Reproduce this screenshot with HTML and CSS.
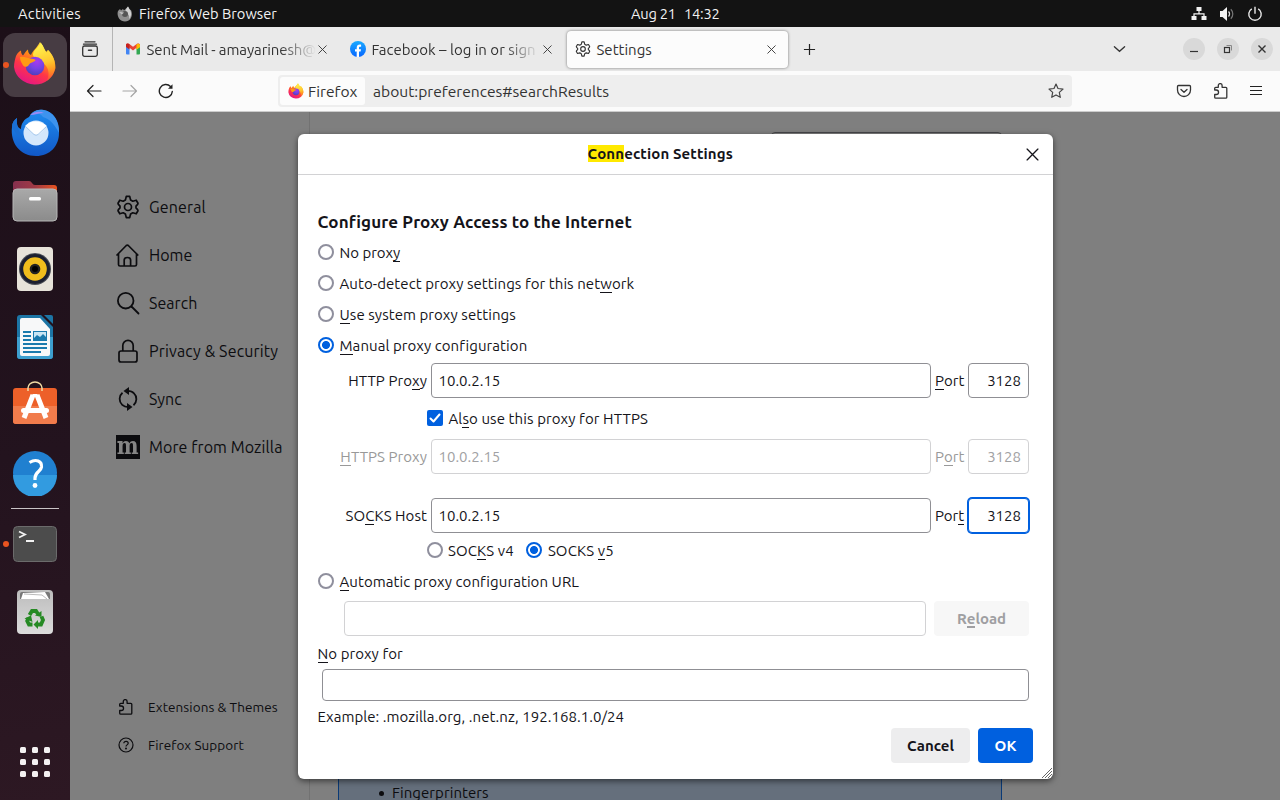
FILE: index.html
```html
<!DOCTYPE html>
<html lang="en">
<head>
<meta charset="utf-8">
<title>Settings</title>
<link rel="stylesheet" href="styles.css">
</head>
<body>
<svg class="defs" width="0" height="0">
  <defs>
    <linearGradient id="fx-body" x1=".8" y1="0" x2=".3" y2="1"><stop offset="0" stop-color="#fff44f"/><stop offset=".35" stop-color="#ff980e"/><stop offset=".65" stop-color="#ff3647"/><stop offset="1" stop-color="#e31587"/></linearGradient>
    <linearGradient id="fx-flame" x1=".5" y1="0" x2=".7" y2="1"><stop offset="0" stop-color="#fff44f"/><stop offset=".5" stop-color="#ffc830"/><stop offset="1" stop-color="#ff8a16" stop-opacity=".3"/></linearGradient>
    <radialGradient id="fx-globe" cx=".6" cy=".25" r=".8"><stop offset="0" stop-color="#a83af0"/><stop offset=".5" stop-color="#7542e5"/><stop offset="1" stop-color="#4a3fb8"/></radialGradient>
    <linearGradient id="tb" x1="0" y1="0" x2="0" y2="1"><stop offset="0" stop-color="#1f8df0"/><stop offset="1" stop-color="#1158c7"/></linearGradient>
    <linearGradient id="folder" x1="0" y1="0" x2="1" y2="0"><stop offset="0" stop-color="#86304f"/><stop offset=".5" stop-color="#a03a45"/><stop offset="1" stop-color="#e95420"/></linearGradient>
    <linearGradient id="grey" x1="0" y1="0" x2="0" y2="1"><stop offset="0" stop-color="#a9a9a9"/><stop offset="1" stop-color="#8b8b8b"/></linearGradient>
    <linearGradient id="bin" x1="0" y1="0" x2="0" y2="1"><stop offset="0" stop-color="#bcbcbc"/><stop offset="1" stop-color="#dcdcdc"/></linearGradient>
    <linearGradient id="fb" x1="0" y1="0" x2="0" y2="1"><stop offset="0" stop-color="#19aaff"/><stop offset="1" stop-color="#0866ff"/></linearGradient>
  </defs>
  <symbol id="firefox" viewBox="0 0 44 46">
    <path d="M3 14C5 10 7 9 8 8.500c0 3 1 4 2 5 1-1 3-5 5-6 0 3 1 4.500 3 5.500 2-5 6-7 9-13 3 3 3.500 7 6 10l2-2c5 5 7.500 11 7.500 18A21 20 0 0 1 1 25C1 21 2 17 3 14z" fill="url(#fx-body)"/>
    <path d="M28 1c3 3 3 7 6 10l1-3c10 10 9 24-1 31 3-8 2-15-6-19-3-2-7-3-8-7 0-5 5-7 8-12z" fill="url(#fx-flame)"/>
    <circle cx="22" cy="24" r="9.300" fill="url(#fx-globe)"/>
    <path d="M7 15c4-1 7 1 10 1.500 3 .5 5 .5 5.500 1.500-.500 2-4 2-6 4-1 1-1 2-2.500 2.500-3 1-4-1-5-3-1-2-2-3-2-6.500z" fill="#ff9a13"/>
  </symbol>
  <symbol id="gear" viewBox="0 0 24 24">
    <path d="M10.300 1.400h3.400l.9 3.600 2.200 1.200 3.400-1 1.800 3-.4 1.200-1.600 1.700v1.800l1.600 1.700.4 1.200-1.800 3-3.400-1-2.200 1.200-.9 3.600h-3.400l-.9-3.600-2.200-1.200-3.400 1-1.800-3 .4-1.200L4 12.900v-1.800L2.400 9.400 2 8.200l1.800-3 3.400 1L9.400 5z" fill="none" stroke="currentColor" stroke-width="1.700" stroke-linejoin="round"/>
    <circle cx="12" cy="12" r="3.500" fill="none" stroke="currentColor" stroke-width="1.700"/>
  </symbol>
  <symbol id="puzzle" viewBox="0 0 16 16">
    <path d="M1.700 7V5.300a1 1 0 0 1 1-1h2.600V2.500a1.900 1.900 0 0 1 3.800 0v1.800h3.700a1 1 0 0 1 1 1v8.900a1 1 0 0 1-1 1H2.700a1 1 0 0 1-1-1v-2.700h1.600a1.900 1.900 0 0 0 0-4.500z" fill="none" stroke="currentColor" stroke-width="1.300" stroke-linejoin="round"/>
  </symbol>
  <symbol id="x" viewBox="0 0 12 12"><path d="M1 1l10 10M11 1L1 11" fill="none" stroke="currentColor" stroke-width="1.200" stroke-linecap="round"/></symbol>
</svg>

<header class="topbar">
  <span class="activities">Activities</span>
  <span class="app">
    <svg class="app-icon" viewBox="0 0 16 16"><path d="M1 5l2-2 1 1.500L6 3l1 1.500L11 .5l1.500 3L14 4c2 4 1 11-6 11.500C2 15.500-.500 9 1 5z" fill="#8f8f8f"/><path d="M11 .5l2 3.500c2 3 1 7-1 9 1-4-1-5-3-6-1-2 0-4 2-6.500z" fill="#d2d2d2"/><circle cx="8" cy="8" r="3" fill="#555"/><path d="M2 6l5 .5-2 2z" fill="#c4c4c4"/></svg>
    <span class="app-name">Firefox Web Browser</span>
  </span>
  <span class="clock"><span>Aug 21</span><span>14:32</span></span>
  <span class="tray">
    <svg width="16" height="16" viewBox="0 0 16 16" fill="#f2f2f2"><path d="M5.500 1h5v4h-5zM.5 10h5v4h-5zM10.500 10h5v4h-5z"/><path d="M8 4v4M3 11V7.800h10V11" fill="none" stroke="#f2f2f2" stroke-width="1.200"/></svg>
    <svg width="16" height="16" viewBox="0 0 16 16"><path d="M1 5h2.500L8 1v14L3.500 11H1z" fill="#f2f2f2"/><path d="M9.500 5.500a3.500 3.500 0 0 1 0 5" stroke="#ddd" fill="none" stroke-width="1.300"/><path d="M11.800 3.300a6.500 6.500 0 0 1 0 9.400" stroke="#777" fill="none" stroke-width="1.200"/></svg>
    <svg width="16" height="16" viewBox="0 0 16 16" fill="none" stroke="#eaeaea" stroke-width="1.400"><path d="M4.800 2.800a6.200 6.200 0 1 0 6.400 0M8 .8v7"/></svg>
  </span>
</header>

<div class="workspace">
  <nav class="dock">
    <div class="dock-item active running"><svg width="44" height="46"><use href="#firefox"/></svg></div>
    <div class="dock-item"><svg width="50" height="48" viewBox="0 0 50 48"><path d="M2 18C0 34 10 47 26 47c14 0 23-10 23-23C49 11 43 2 33 1 26 0 22 3 19 8c-5 2-8 7-8 12-3-1-5-4-4-11-3 2-5 5-5 9z" fill="url(#tb)"/><path d="M49 24C50 12 43 3 34 1c-6-1-10 1-13 4 6-2 10 0 12 3 7 2 12 8 16 16z" fill="#3d93ee"/><path d="M20 6c5-4 10-4 14-2-5 0-9 2-14 2z" fill="#9c8bf5"/><path d="M7 9c-1 9 3 17 9 23-6-3-11-8-14-14 0-4 2-7 5-9z" fill="#1a6fd4"/><circle cx="26" cy="24" r="12.500" fill="#d4e7fb"/><path d="M15 17c6 6 9 9 11.500 9S32 23 37 17c-6-5-15-7-22 0z" fill="#fff"/><path d="M15 17l9 8.500q2 1.500 4 0L37 17" stroke="#a6c8ec" fill="none"/></svg></div>
    <div class="dock-item"><svg width="46" height="42" viewBox="0 0 46 42"><path d="M1 14V4q0-3 3-3h13q2 0 3 2t3 2h19q3 0 3 3v8z" fill="url(#folder)"/><rect x="1" y="9" width="44" height="32" rx="4" fill="url(#grey)" stroke="#b7b7b7"/><rect x="17" y="17" width="12" height="3.500" rx="1.500" fill="#fff"/></svg></div>
    <div class="dock-item"><svg width="38" height="46" viewBox="0 0 38 46"><rect x="1" y="1" width="36" height="44" rx="4" fill="#e7e3da"/><circle cx="19" cy="23" r="16" fill="#4a4d55"/><circle cx="19" cy="23" r="15" fill="#1c2030"/><circle cx="19" cy="23" r="11.800" fill="#f0bd1c"/><circle cx="19" cy="23" r="5.300" fill="#222"/><circle cx="19" cy="23" r="3" fill="#000"/></svg></div>
    <div class="dock-item"><svg width="38" height="46" viewBox="0 0 38 46"><path d="M4 1h21l12 12v29q0 3-3 3H4q-3 0-3-3V4q0-3 3-3z" fill="#1c75a5"/><path d="M1 23h36v19q0 3-3 3H4q-3 0-3-3z" fill="#3d9fcf"/><path d="M28 1h7q2 0 2 2v7z" fill="#1c75a5"/><path d="M6 4h18l10 11v25q0 2-2 2H6q-2 0-2-2V6q0-2 2-2z" fill="#f7f8f9"/><path d="M7 18h8M7 22h8M7 26h8M7 30h24M7 34h24M7 38h18" stroke="#1b7aad" stroke-width="2"/><rect x="17.500" y="17.500" width="13" height="9" fill="#c9e5f4" stroke="#1b7aad"/><path d="M18 26v-2l3-3 3 2 3-3 3 3v3z" fill="#1b7aad"/></svg></div>
    <div class="dock-item store"><svg width="46" height="46" viewBox="0 0 46 46"><path d="M1 11q0-3 3-3h38q3 0 3 3v30q0 3-3 3H4q-3 0-3-3z" fill="#ed6029"/><path d="M1 26h44v15q0 3-3 3H4q-3 0-3-3z" fill="#f17c4c"/><path d="M16 11V8a7 6 0 0 1 14 0v3" fill="none" stroke="#f1dba4" stroke-width="1.500"/><path d="M23 14v3M21 15l-9 23M25 15l9 23" stroke="#fff" stroke-width="5"/><rect x="9" y="28" width="28" height="5" rx="2.500" fill="#fff"/></svg></div>
    <div class="dock-item help"><svg width="46" height="46" viewBox="0 0 46 46"><circle cx="23" cy="23" r="22" fill="#2080d0"/><path d="M1 25a22 22 0 0 0 44 0z" fill="#329be0"/><path d="M17.500 12.500C24 8.500 30 11 29.500 17c-.5 4.500-6.500 5-6.500 11V30" fill="none" stroke="#fff" stroke-width="3.200"/><circle cx="23" cy="35.500" r="2.400" fill="#fff"/></svg></div>
    <div class="dock-sep"></div>
    <div class="dock-item terminal running"><svg width="46" height="38" viewBox="0 0 46 38"><rect x="1.500" y="1.500" width="43" height="35" rx="4" fill="#4c4c4c" stroke="#6b6b6b"/><path d="M7 6.500l6 3-6 3M14 16h8" fill="none" stroke="#f2f2f2" stroke-width="1.800"/></svg></div>
    <div class="dock-item trash"><svg width="38" height="46" viewBox="0 0 38 46"><rect x="1" y="1" width="36" height="44" rx="4" fill="url(#bin)"/><path d="M4 10V5q0-2 2-2h26q2 0 2 2v5z" fill="#777"/><path d="M5 10l2-6 22-1 4 7z" fill="#fff"/><path d="M8 5l18 1 5 4" stroke="#bbb" fill="none"/><g fill="none" stroke="#268a24" stroke-width="3.800"><path d="M13.500 26l2.500-4h4l2 3M25.500 27.500l1.500 3.500-2 4.500h-3M16.500 35.500h-3.500l-1.800-3.500 1.300-3"/></g><g fill="#268a24"><path d="M19 26.500l6.500-4.500v6zM22 31v9l-4.500-4.500zM8.500 29.500l6.500-3 1.500 6.500z"/></g></svg></div>
    <div class="app-grid"><i></i><i></i><i></i><i></i><i></i><i></i><i></i><i></i><i></i></div>
  </nav>

  <div class="browser">
    <div class="tabbar">
      <div class="view-btn"><svg width="18" height="18" viewBox="0 0 18 18" fill="none" stroke="#333" stroke-width="1.300" stroke-linecap="round"><path d="M4 1.800h10M2.500 4.200h13"/><rect x="1.700" y="6" width="14.600" height="10.300" rx="1.800"/><path d="M7.500 10.300h3" stroke-width="1.500"/></svg></div>
      <div class="tab gmail">
        <svg class="fav" viewBox="0 0 16 16"><path d="M1 4v8.500q0 1 1 1h2.500V6z" fill="#4285f4"/><path d="M15 4v8.500q0 1-1 1h-2.500V6z" fill="#34a853"/><path d="M11.500 5L15 3v3l-3.500 2.500z" fill="#fbbc04"/><path d="M1 4c0-1.500 2-2 3-1.200l4 3 4-3C13 2 15 2.500 15 4l-7 5.500L1 4z" fill="#ea4335"/><path d="M11.500 3.300c2-1.300 3.500-.500 3.500 1V6l-3.500 2.500z" fill="#fbbc04"/><path d="M1 4v2l3.500 2.500V3.200C2.500 2 1 2.500 1 4z" fill="#c5221f"/></svg>
        <span class="label">Sent Mail - amayarinesh@</span><svg class="close"><use href="#x"/></svg>
      </div>
      <div class="tab facebook">
        <svg class="fav" viewBox="0 0 16 16"><circle cx="8" cy="8" r="8" fill="url(#fb)"/><path d="M6.700 15.900V10.500H5V8.200h1.700V7c0-2.400 1.200-3.500 3.100-3.500.5 0 1 .1 1.300.2v2h-.9c-1 0-1.200.5-1.200 1.300v1.200H11l-.4 2.300H9v5.400z" fill="#fff"/></svg>
        <span class="label">Facebook – log in or sign</span><svg class="close"><use href="#x"/></svg>
      </div>
      <div class="tab selected">
        <svg class="fav"><use href="#gear"/></svg>
        <span class="label">Settings</span><svg class="close"><use href="#x"/></svg>
      </div>
      <svg class="new-tab" viewBox="0 0 14 14"><path d="M7 1v12M1 7h12" stroke="#222" stroke-width="1.300"/></svg>
      <svg class="all-tabs" viewBox="0 0 14 8"><path d="M1.500 1.500L7 6.500l5.500-5" fill="none" stroke="#333" stroke-width="1.400" stroke-linecap="round"/></svg>
      <div class="win-controls">
        <span><svg width="10" height="10" viewBox="0 0 10 10"><path d="M1 7.500h8" stroke="#333" stroke-width="1.200"/></svg></span>
        <span><svg width="10" height="10" viewBox="0 0 10 10" fill="none"><rect x="1.500" y="3.500" width="5" height="5" stroke="#333" stroke-width="1.200"/><path d="M3.500 1.500h5v5" stroke="#888"/></svg></span>
        <span><svg width="10" height="10" viewBox="0 0 10 10"><path d="M1.500 1.500l7 7M8.500 1.500l-7 7" stroke="#333" stroke-width="1.400"/></svg></span>
      </div>
    </div>

    <div class="toolbar">
      <div class="nav-buttons">
        <svg width="16" height="14" viewBox="0 0 16 14" fill="none" stroke="#222" stroke-width="1.200" stroke-linecap="round" stroke-linejoin="round"><path d="M15 7H1.500M7 1.500L1.500 7 7 12.500"/></svg>
        <svg width="16" height="14" viewBox="0 0 16 14" fill="none" stroke="#a5a5a5" stroke-width="1.200" stroke-linecap="round" stroke-linejoin="round"><path d="M1 7h13.500M9 1.500L14.500 7 9 12.500"/></svg>
        <svg width="16" height="16" viewBox="0 0 16 16" fill="none" stroke="#222" stroke-width="1.400" stroke-linecap="round"><path d="M14.300 8.500A6.500 6.500 0 1 1 12.500 3.500"/><path d="M14.500 1.300v4.500H10z" fill="#222" stroke="none"/></svg>
      </div>
      <div class="urlbar">
        <span class="identity"><svg width="16" height="17"><use href="#firefox"/></svg><span>Firefox</span></span>
        <span class="url">about:preferences#searchResults</span>
        <svg width="16" height="16" viewBox="0 0 16 16" fill="none" stroke="#444" stroke-width="1.200" stroke-linejoin="round"><path d="M8 1l2 4.500 5 .6-3.700 3.300 1 4.900L8 11.900l-4.300 2.400 1-4.900L1 6.100l5-.6z"/></svg>
      </div>
      <div class="tools">
        <svg width="16" height="16" viewBox="0 0 16 16" fill="none" stroke="#333" stroke-width="1.300" stroke-linecap="round" stroke-linejoin="round"><path d="M2.500 2.500h11q1 0 1 1V7a6.500 6.500 0 0 1-13 0V3.500q0-1 1-1zM5 6.500l3 2.800 3-2.800"/></svg>
        <svg width="16" height="16"><use href="#puzzle"/></svg>
        <svg width="14" height="12" viewBox="0 0 14 12"><path d="M1 1.500h12M1 5.500h12M1 9.500h12" stroke="#222" stroke-width="1.200"/></svg>
      </div>
    </div>

    <main class="page">
      <aside class="categories">
        <ul class="main-cats">
          <li><svg><use href="#gear"/></svg><span>General</span></li>
          <li><svg viewBox="0 0 24 24" fill="none" stroke="currentColor" stroke-width="1.700" stroke-linecap="round" stroke-linejoin="round"><path d="M1 12L10.300 2.500a1.500 1.500 0 0 1 2 0L21.800 12M2.500 10.500v11q0 1.500 1.500 1.500h15q1.500 0 1.500-1.500v-11M8.200 23v-6q0-2.500 3.200-2.500t3.200 2.500v6"/></svg><span class="tight">Home</span></li>
          <li><svg viewBox="0 0 24 24" fill="none" stroke="currentColor" stroke-width="1.800" stroke-linecap="round"><circle cx="9.700" cy="9.700" r="7.800"/><path d="M15.500 15.500l7 7"/></svg><span class="tight">Search</span></li>
          <li><svg viewBox="0 0 24 24" fill="none" stroke="currentColor" stroke-width="1.700"><rect x="3" y="12" width="18" height="11" rx="2"/><path d="M6.800 12V6.500a5.200 5.200 0 0 1 10.400 0V12"/></svg><span>Privacy &amp; Security</span></li>
          <li><svg viewBox="0 0 24 24" fill="none" stroke="currentColor" stroke-width="1.800"><path d="M6.500 5.800a8 8 0 0 0-.3 12M17.500 18.200a8 8 0 0 0 .3-12Q16 4 11.500 3.900M12.500 20.100Q8.500 20 6.200 17.800"/><path d="M7.500 4l5.500-4v8zM16.500 20L11 16v8z" fill="currentColor" stroke="none"/></svg><span class="tight">Sync</span></li>
          <li><b class="moz"><span>m</span></b><span class="more">More from Mozilla</span></li>
        </ul>
        <ul class="side-links">
          <li><svg><use href="#puzzle"/></svg><span>Extensions &amp; Themes</span></li>
          <li><svg viewBox="0 0 16 16" fill="none" stroke="currentColor" stroke-width="1.200"><circle cx="8" cy="8" r="7"/><path d="M5.800 6.300C6 3.700 10.200 3.700 10.200 6.300c0 1.500-2.200 1.700-2.200 3.200"/><circle cx="8" cy="11.600" r=".4" fill="currentColor"/></svg><span>Firefox Support</span></li>
        </ul>
      </aside>
      <section class="pane">
        <div class="find-box"></div>
        <div class="etp-card"><ul><li>Fingerprinters</li></ul></div>
      </section>

      <div class="overlay">
        <div class="dialog">
          <div class="dialog-head"><h1><mark>Conn</mark>ection Settings</h1><svg class="dialog-close"><use href="#x"/></svg></div>
          <div class="dialog-body">
            <h2>Configure Proxy Access to the Internet</h2>
            <label class="opt"><i class="radio"></i><span class="plain">No prox<u>y</u></span></label>
            <label class="opt"><i class="radio"></i><span>Auto-detect proxy settings for this net<u>w</u>ork</span></label>
            <label class="opt"><i class="radio"></i><span><u>U</u>se system proxy settings</span></label>
            <label class="opt"><i class="radio on"></i><span><u>M</u>anual proxy configuration</span></label>
            <div class="proxy-grid">
              <span class="lbl">HTTP Pro<u>x</u>y</span><div class="field">10.0.2.15</div><span class="plain"><u>P</u>ort</span><div class="field port">3128</div>
              <div class="sub check-row"><i class="check"><svg width="16" height="16" viewBox="0 0 16 16"><path d="M3.500 8.500l3 3 6-7" fill="none" stroke="#fff" stroke-width="2" stroke-linecap="round" stroke-linejoin="round"/></svg></i><span>Al<u>s</u>o use this proxy for HTTPS</span></div>
              <span class="lbl off"><u>H</u>TTPS Proxy</span><div class="field off">10.0.2.15</div><span class="plain off">P<u>o</u>rt</span><div class="field port off">3128</div>
              <div class="gap"></div>
              <span class="lbl">SO<u>C</u>KS Host</span><div class="field">10.0.2.15</div><span class="plain">Por<u>t</u></span><div class="field port focus">3128</div>
              <div class="sub socks"><i class="radio"></i><span>SOC<u>K</u>S v4</span><i class="radio on"></i><span>SOCKS <u>v</u>5</span></div>
            </div>
            <label class="opt"><i class="radio"></i><span><u>A</u>utomatic proxy configuration URL</span></label>
            <div class="url-row"><div class="field off"></div><div class="btn reload">R<u>e</u>load</div></div>
            <div class="line"><u>N</u>o proxy for</div>
            <div class="field no-proxy"></div>
            <div class="line example">Example: .mozilla.org, .net.nz, 192.168.1.0/24</div>
            <div class="actions"><div class="btn cancel">Cancel</div><div class="btn ok">OK</div></div>
          </div>
          <svg class="resizer" viewBox="0 0 12 12"><path d="M1 11L11 1M4 11l7-7M7 11l4-4M10 11l1-1" stroke="#666" stroke-width="1"/></svg>
        </div>
      </div>
    </main>
  </div>
</div>
</body>
</html>
```
FILE: styles.css
```css
* { box-sizing: border-box; }
body {
  margin: 0; width: 1280px; height: 800px; overflow: hidden;
  display: flex; flex-direction: column;
  font: 15px/20px "Ubuntu", "Noto Sans", sans-serif; color: #15141a;
}
.defs { position: absolute; }
svg { display: block; flex: none; }
ul { list-style: none; margin: 0; padding: 0; }
i { font-style: normal; }
u { text-decoration: none; box-shadow: inset 0 -1px 0 currentColor; display: inline-block; line-height: 18px; height: 18px; }

/* Desktop bar */
.topbar {
  height: 27px; background: #131313; color: #f2f2f2; flex: none; padding: 0 17.500px 0 18px;
  display: grid; grid-template-columns: 1fr auto 1fr; grid-template-rows: 27px; align-items: center;
  font-size: 14.67px;
}
.activities { grid-column: 1; grid-row: 1; letter-spacing: .28px; }
.app { grid-column: 1; grid-row: 1; padding-left: 99px; display: flex; gap: 6px; align-items: center; white-space: nowrap; }
.app-icon { width: 16px; height: 16px; }
.clock { grid-column: 2; display: flex; gap: 8px; letter-spacing: -.2px; padding-left: 70px; }
.tray { grid-column: 3; justify-self: end; display: flex; gap: 12px; }

.workspace { flex: 1; display: flex; min-height: 0; }

/* Dock */
.dock { width: 70px; flex: none; background: linear-gradient(170deg, #1c0f18, #23131e 55%, #2d1823); display: flex; flex-direction: column; align-items: center; padding-top: 6px; }
.dock-item { width: 64px; height: 64px; margin-bottom: 4px; flex: none; display: grid; place-items: center; position: relative; border-radius: 12px; }
.dock-item.active { background: #473c43; }
.running::before { content: ""; position: absolute; left: 0; top: 29px; width: 6px; height: 6px; border-radius: 50%; background: #e95420; }
.dock-item.store { padding-bottom: 5px; }
.dock-item.help { margin-bottom: 3px; padding-bottom: 1px; }
.dock-sep { width: 48px; height: 1px; background: #c9c4c6; flex: none; }
.dock-item.terminal { margin-top: 3px; }
.app-grid { margin-top: 99px; display: grid; grid-template-columns: repeat(3, 6px); grid-auto-rows: 6px; gap: 6px; }
.app-grid i { border-radius: 1.500px; background: #f4f1f2; }

/* Browser chrome */
.browser { flex: 1; display: flex; flex-direction: column; min-width: 0; }
.tabbar { height: 44px; background: #eaeaea; display: flex; align-items: center; flex: none; padding-right: 7px; }
.view-btn { width: 43px; height: 44px; border-right: 1px solid #b5b5b5; display: grid; place-items: center; padding-right: 3px; }
.tab { height: 38px; display: flex; align-items: center; color: #333; }
.tab .fav { width: 16px; height: 16px; color: #333; }
.tab .label { white-space: nowrap; flex: 1; margin-left: 5.500px; line-height: 24px; padding-top: 2px; }
.tab .close { width: 9px; height: 9px; }
.gmail { width: 225px; padding: 0 11px 0 12px; letter-spacing: -.1px; }
.facebook { width: 228px; padding: 0 14px 0 12px; }
.gmail .label { width: 169px; flex: none; margin-right: auto; }
.facebook .label { margin-right: 3px; }
.gmail .label, .facebook .label { -webkit-mask-image: linear-gradient(90deg, #000 calc(100% - 36px), transparent); mask-image: linear-gradient(90deg, #000 calc(100% - 36px), transparent); }
.selected { width: 221px; height: 37px; margin: 0 1px; background: #fcfcfc; border-radius: 4px; box-shadow: 0 0 3px rgba(0, 0, 0, .5); padding: 0 12px 0 8px; }
.new-tab { width: 13px; height: 13px; margin-left: 14px; }
.all-tabs { width: 13px; height: 8px; margin-left: auto; }
.win-controls { display: flex; gap: 12px; margin-left: 57px; }
.win-controls span { width: 22px; height: 22px; border-radius: 50%; background: #d9d9d9; display: grid; place-items: center; }

.toolbar { height: 41px; background: #fbfbfb; border-bottom: 1px solid #ccc; display: flex; align-items: center; flex: none; padding-right: 17px; }
.nav-buttons { display: flex; gap: 20px; align-items: center; padding-left: 16px; width: 208px; }
.urlbar { width: 794px; height: 32px; background: #eee; border-radius: 4px; display: flex; align-items: center; padding: 0 8px 0 2px; color: #333; font-size: 15.6px; }
.identity { height: 28px; width: 85px; background: #fcfcfc; border-radius: 3px; display: flex; align-items: center; gap: 4px; padding-left: 8px; }
.url { flex: 1; padding-left: 8px; }
.tools { margin-left: auto; display: flex; align-items: center; gap: 21px; color: #333; }
.tools svg:last-child { margin-left: -1px; }

/* Preferences page */
.page { flex: 1; background: #7f7f7f; display: flex; position: relative; min-height: 0; color: #0c0c0f; }
.categories { width: 240px; border-right: 1px solid #727272; padding: 71px 0 36px 46px; display: flex; flex-direction: column; justify-content: space-between; }
.main-cats li { height: 48px; display: flex; align-items: center; gap: 9px; font-size: 16px; letter-spacing: .15px; white-space: nowrap; }
.main-cats svg { width: 24px; height: 24px; }
.main-cats .tight { letter-spacing: .05px; }
.main-cats .more { letter-spacing: .1px; }
.moz { width: 24px; height: 24px; background: #0c0c0f; color: #858585; font: 700 24px/22px "DejaVu Serif", serif; letter-spacing: 0; display: flex; justify-content: center; }
.moz span { transform: scaleX(.86); }
.side-links li { height: 38px; display: flex; align-items: center; gap: 14px; font-size: 13.5px; letter-spacing: .08px; white-space: nowrap; }
.side-links svg { width: 16px; height: 16px; margin-left: 2px; }
.pane { width: 692px; padding: 20px 0 0 28px; display: flex; flex-direction: column; justify-content: space-between; }
.find-box { width: 231px; height: 32px; border: 1px solid #47474a; border-radius: 4px; align-self: flex-end; }
.etp-card { height: 60px; border: 1px solid #0a3a76; background: #656f7c; padding: 24px 0 0 40px; margin-bottom: -20px; }
.etp-card li { display: flex; align-items: center; gap: 8px; line-height: 15px; letter-spacing: .07px; }
.etp-card li::before { content: ""; width: 5px; height: 5px; border-radius: 50%; background: currentColor; margin-top: 2px; }

/* Proxy dialog */
.overlay { position: absolute; inset: 0; padding: 22px 0 0 228px; }
.dialog { width: 755px; height: 645px; background: #fff; border-radius: 6px; box-shadow: 0 2px 6px rgba(0, 0, 0, .55); position: relative; color: #15141a; letter-spacing: .07px; }
.dialog-head { height: 41px; border-bottom: 1px solid #d2d2d4; display: grid; grid-template-columns: 1fr auto 1fr; align-items: center; padding: 0 14.500px 0 14px; }
h1 { grid-column: 2; margin: 0 30px 1px 0; font-size: 15px; line-height: 17px; letter-spacing: .12px; }
mark { background: #ffe900; color: inherit; display: inline-block; height: 17px; }
.dialog-close { width: 13px; height: 13px; justify-self: end; }
.dialog-body { padding: 32px 20px 0; }
h2 { margin: 0 0 0 -.5px; height: 30px; font-size: 17px; line-height: 30px; letter-spacing: .12px; }
.opt { display: flex; align-items: center; height: 31px; gap: 5.500px; }
.opt .radio { margin-bottom: 2px; }
.plain { letter-spacing: 0; white-space: nowrap; }
.radio { width: 16px; height: 16px; flex: none; border-radius: 50%; border: 2px solid #8f8f9d; background: #fff; }
.radio.on { border-color: #0060df; background: radial-gradient(circle, #0060df 3.600px, #fff 4.400px); }
.proxy-grid { margin-top: 2px; display: grid; grid-template-columns: 109px 500px 29px 61px; column-gap: 4px; align-items: center; }
.lbl { text-align: right; white-space: nowrap; }
.field { height: 35px; border: 1px solid #8f8f94; border-radius: 4px; padding: 0 7px 0 6.500px; line-height: 33px; letter-spacing: 0; background: #fff; }
.port { text-align: right; }
.off { color: #999; }
.field.off { border-color: #d2d2d4; color: #a1a1a3; }
.focus { border-color: #0060df; box-shadow: 0 0 0 1px #0060df; }
.sub { grid-column: 1 / -1; display: flex; align-items: center; padding-left: 109px; }
.check-row { height: 41px; gap: 5.500px; letter-spacing: .1px; }
.check { width: 16px; height: 16px; background: #0060df; border-radius: 2px; margin-bottom: 2px; }
.gap { grid-column: 1 / -1; height: 24px; }
.socks { height: 33px; gap: 5px; padding-top: 3px; letter-spacing: .12px; }
.socks .radio { margin-bottom: 2px; }
.socks .on { margin: 0 1px 2px 7px; }
.url-row { margin-top: 4px; display: flex; gap: 8px; padding-left: 26px; }
.url-row .field { width: 582px; }
.btn { height: 35px; border-radius: 4px; font-weight: 700; line-height: 35px; text-align: center; letter-spacing: 0; background: #ededee; }
.reload { width: 95px; color: #9f9fa2; background: #f7f7f7; }
.reload u { box-shadow: inset 0 -2px 0 currentColor; }
.line { line-height: 33px; height: 33px; margin-top: 1px; margin-left: -.5px; }
.no-proxy { height: 32px; width: 707px; margin-left: 4px; margin-top: -1px; }
.example { margin-top: 0; height: 27px; line-height: 31px; letter-spacing: .05px; }
.actions { display: flex; justify-content: flex-end; gap: 8px; }
.cancel { width: 79px; }
.ok { width: 55px; background: #0060df; color: #fff; }
.resizer { position: absolute; right: 0; bottom: 0; width: 12px; height: 12px; }
```
